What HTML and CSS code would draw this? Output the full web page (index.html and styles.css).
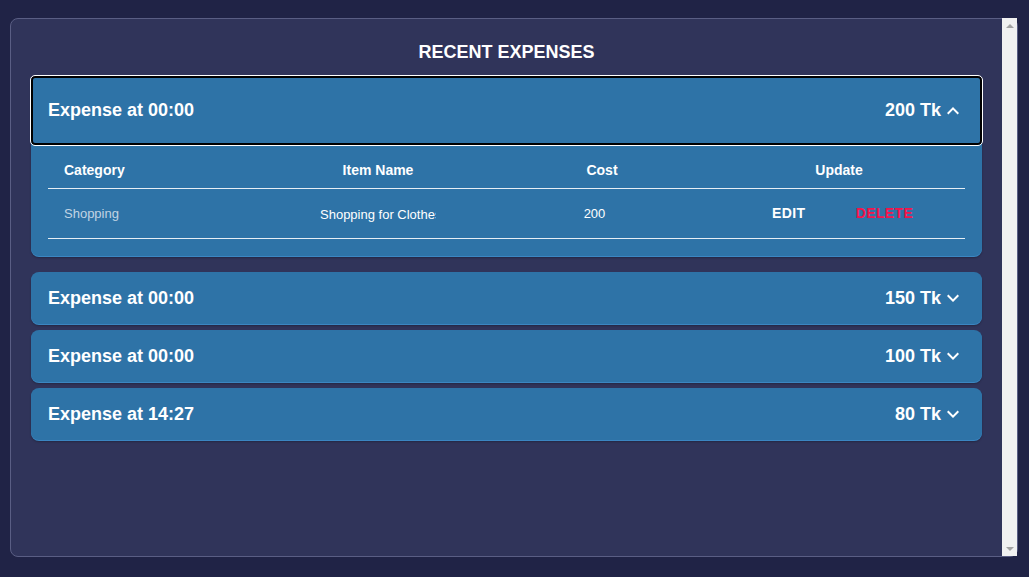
FILE: index.html
```html
<!DOCTYPE html>
<html lang="en">
<head>
<meta charset="utf-8">
<title>Recent Expenses</title>
<link rel="stylesheet" href="styles.css">
</head>
<body>
<div class="page">
  <section class="panel">
    <div class="content">
      <h2 class="title">RECENT EXPENSES</h2>
      <div class="list">
        <div class="acc expanded">
          <div class="acc-head focused">
            <span class="label">Expense at 00:00</span>
            <span class="amt">200 Tk
              <svg class="chev" viewBox="0 0 24 24" width="24" height="24"><path d="M12 8l-6 6 1.41 1.41L12 10.83l4.59 4.58L18 14z"/></svg>
            </span>
          </div>
          <div class="acc-body">
            <div class="tbl">
              <div class="row head">
                <div class="c c1">Category</div>
                <div class="c c2">Item Name</div>
                <div class="c c3">Cost</div>
                <div class="c c4">Update</div>
              </div>
              <div class="row data">
                <div class="c c1 cat">Shopping</div>
                <div class="c c2"><span class="item">Shopping for Clothes</span></div>
                <div class="c c3"><span class="cost">200</span></div>
                <div class="c c4 actions">
                  <button class="btn edit">EDIT</button>
                  <button class="btn del">DELETE</button>
                </div>
              </div>
            </div>
          </div>
        </div>
        <div class="acc">
          <div class="acc-head">
            <span class="label">Expense at 00:00</span>
            <span class="amt">150 Tk
              <svg class="chev" viewBox="0 0 24 24" width="24" height="24"><path d="M16.59 8.59 12 13.17 7.41 8.59 6 10l6 6 6-6z"/></svg>
            </span>
          </div>
        </div>
        <div class="acc">
          <div class="acc-head">
            <span class="label">Expense at 00:00</span>
            <span class="amt">100 Tk
              <svg class="chev" viewBox="0 0 24 24" width="24" height="24"><path d="M16.59 8.59 12 13.17 7.41 8.59 6 10l6 6 6-6z"/></svg>
            </span>
          </div>
        </div>
        <div class="acc">
          <div class="acc-head">
            <span class="label">Expense at 14:27</span>
            <span class="amt">80 Tk
              <svg class="chev" viewBox="0 0 24 24" width="24" height="24"><path d="M16.59 8.59 12 13.17 7.41 8.59 6 10l6 6 6-6z"/></svg>
            </span>
          </div>
        </div>
      </div>
    </div>
    <div class="scrollbar">
      <span class="arrow up"></span>
      <span class="arrow down"></span>
    </div>
  </section>
</div>
</body>
</html>
```
FILE: styles.css
```css
* { box-sizing: border-box; }
html, body {
  margin: 0;
  padding: 0;
  background: #202346;
  font-family: "Liberation Sans", Arial, sans-serif;
  color: #fff;
}
.page {
  padding: 18px 11px 20px 10px;
  height: 577px;
}
.panel {
  height: 539px;
  background: #30345a;
  border: 1px solid #5a5e84;
  border-radius: 8px;
  display: flex;
}
.content {
  flex: 1;
  min-width: 0;
}
.scrollbar {
  width: 15px;
  flex: none;
  background: #f1f1f1;
  display: flex;
  flex-direction: column;
  justify-content: space-between;
  align-items: center;
  padding: 6px 0 5px;
  margin: -1px 0 0;
}
.arrow {
  width: 0;
  height: 0;
  border-left: 4px solid transparent;
  border-right: 4px solid transparent;
}
.arrow.up { border-bottom: 4px solid #a3a3a3; }
.arrow.down { border-top: 4px solid #a3a3a3; }
.title {
  margin: 23px 0 13px;
  font-size: 18px;
  line-height: 21px;
  font-weight: 700;
  text-align: center;
  color: #fff;
}
.list {
  padding: 0 20px;
  display: flex;
  flex-direction: column;
  gap: 6px;
}
.acc {
  background: #2e73a7;
  border-radius: 8px;
  box-shadow: 0 1px 0 #3b86c2, 0 2px 2px rgba(0,0,0,0.25);
}
.acc.expanded {
  margin-bottom: 10px;
}
.acc-head {
  display: flex;
  align-items: center;
  justify-content: space-between;
  height: 52px;
  padding: 0 17px 0 17px;
  font-size: 18px;
  font-weight: 700;
  line-height: 21px;
}
.acc-head.focused {
  height: 69px;
  border: 2px solid #000;
  border-radius: 4px;
  outline: 1px solid #fff;
  padding: 0 15px 0 15px;
}
.amt {
  display: flex;
  align-items: center;
}
.chev {
  fill: #fff;
  display: block;
  margin-left: 0;
}
.acc-body {
  padding: 8px 17px 17px;
}
.row {
  display: grid;
  grid-template-columns: 217px 226px 222px 252px;
}
.row.head {
  height: 36px;
  padding-bottom: 1px;
  border-bottom: 1px solid #e6eef5;
  font-size: 14px;
  font-weight: 700;
  align-items: center;
}
.row.data {
  height: 50px;
  border-bottom: 1px solid #e6eef5;
  font-size: 13px;
  align-items: center;
}
.c { padding: 0 16px; }
.c2, .c3, .c4 { text-align: center; }
.cat { color: #c1d4e4; }
.item {
  display: inline-block;
  width: 116px;
  overflow: hidden;
  white-space: nowrap;
  text-align: left;
  vertical-align: middle;
}
.cost {
  display: inline-block;
  padding-right: 15px;
}
.actions {
  display: flex;
  justify-content: center;
  gap: 27px;
  padding: 0;
}
.btn {
  background: none;
  border: 0;
  font-family: "Liberation Sans", Arial, sans-serif;
  font-size: 14px;
  font-weight: 700;
  letter-spacing: 0.4px;
  padding: 6px 8px;
  min-width: 64px;
  line-height: 16px;
  margin-top: -2px;
  cursor: pointer;
}
.edit { color: #fff; }
.del { color: #f5134a; }
```
